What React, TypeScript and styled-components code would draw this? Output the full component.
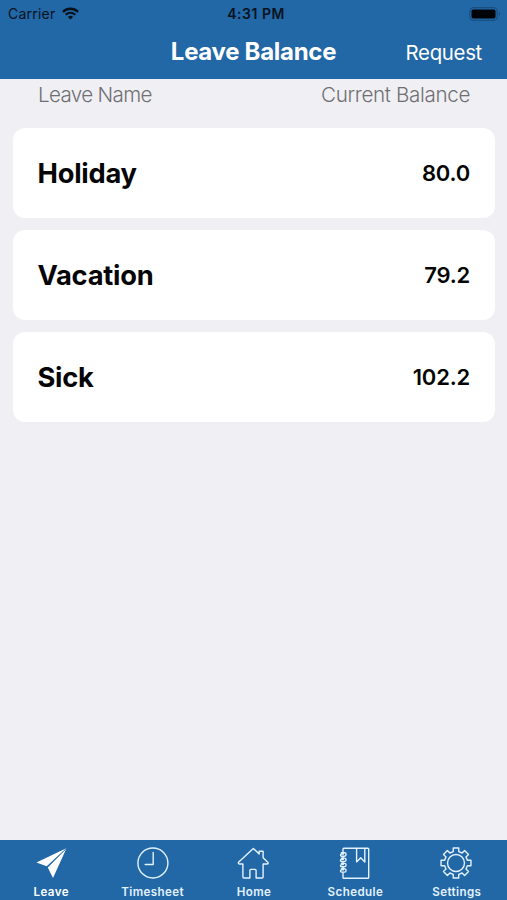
import React from "react";
import styled, { createGlobalStyle } from "styled-components";

const BLUE = "#2267a6";

const GlobalStyle = createGlobalStyle`
  *, *::before, *::after { box-sizing: border-box; }
  html, body { margin: 0; padding: 0; }
  body { font-family: Inter, "Liberation Sans", sans-serif; background: #efeff4; }
`;

const Screen = styled.div`
  width: 100%;
  height: 100vh;
  display: flex;
  flex-direction: column;
  overflow: hidden;
  background: #efeff4;
`;

const TopBar = styled.header`
  height: 79px;
  flex: none;
  background: ${BLUE};
`;

const StatusBar = styled.div`
  height: 27px;
  display: grid;
  grid-template-columns: 1fr auto 1fr;
  align-items: center;
  padding: 0 6px 0 8px;
  color: #07121d;
  font-size: 14px;
  line-height: 27px;
`;

const CarrierGroup = styled.div`
  display: flex;
  align-items: center;
  gap: 7px;
  letter-spacing: 0.22px;
`;

const Clock = styled.div`
  padding: 1px 0 0 3px;
  font-size: 13.9px;
  font-weight: 600;
  line-height: 26px;
  letter-spacing: 0.55px;
`;

const BatterySlot = styled.div`
  display: flex;
  justify-content: flex-end;
`;

const NavBar = styled.div`
  height: 50px;
  display: grid;
  grid-template-columns: 1fr auto 1fr;
  align-items: baseline;
  padding: 10px 25px 0;
  color: #fff;
  line-height: 30px;
`;

const Title = styled.h1`
  grid-column: 2;
  margin: 0;
  font-size: 24px;
  font-weight: 650;
  line-height: 30px;
  letter-spacing: -0.3px;
`;

const RequestButton = styled.button`
  justify-self: end;
  border: 0;
  padding: 0;
  background: none;
  color: #fff;
  font: 400 20.4px/30px Inter, sans-serif;
  letter-spacing: -0.3px;
`;

const Content = styled.main`
  flex: 1;
  padding: 0 12px 0 13px;
`;

const ColumnHeads = styled.div`
  height: 49px;
  display: flex;
  justify-content: space-between;
  padding: 1px 25px 0;
  color: #6f6f73;
  font-size: 20.6px;
  font-weight: 300;
  line-height: 30px;
`;

const ColumnHead = styled.span<{ $tracking: string }>`
  letter-spacing: ${(p) => p.$tracking};
`;

const BalanceList = styled.div`
  display: flex;
  flex-direction: column;
  gap: 12px;
`;

const BalanceCard = styled.div`
  height: 90px;
  display: flex;
  align-items: center;
  justify-content: space-between;
  padding: 0 25px 0 24.5px;
  border-radius: 12px;
  background: #fff;
  color: #050505;
`;

const LeaveName = styled.span`
  font-size: 27.3px;
  font-weight: 650;
  letter-spacing: -0.25px;
`;

const Amount = styled.span`
  font-size: 22px;
  font-weight: 580;
  letter-spacing: -0.2px;
`;

const TabBar = styled.nav`
  height: 60px;
  flex: none;
  display: grid;
  grid-template-columns: repeat(5, 1fr);
  background: ${BLUE};
`;

const Tab = styled.div<{ $active?: boolean }>`
  display: flex;
  flex-direction: column;
  align-items: center;
  padding-top: 6px;
  color: ${(p) => (p.$active ? "#ffffff" : "#e3f2ff")};
`;

const TabLabel = styled.span`
  font-size: 11.6px;
  font-weight: 600;
  line-height: 14px;
  letter-spacing: 0.4px;
  margin: 6px 0 0 1px;
`;

const LineIcon = styled.svg.attrs({ width: 34, height: 34, viewBox: "0 0 34 34" })`
  display: block;
  flex: none;
  margin-bottom: -1px;
  fill: none;
  stroke: currentColor;
  stroke-width: 1.4;
  stroke-linejoin: round;
  stroke-linecap: round;
`;

const WifiIcon = () => (
  <svg width="17" height="13" viewBox="0 0 17 13" fill="none" stroke="#07121d">
    <path d="M.9 4.8a11 11 0 0 1 15.2 0" strokeWidth="2.3" />
    <path d="M3.7 7.7a7 7 0 0 1 9.6 0" strokeWidth="2.1" />
    <path d="M5.9 9.9a3.8 3.8 0 0 1 5.2 0L8.5 12.5Z" fill="#07121d" stroke="none" />
  </svg>
);

const BatteryIcon = () => (
  <svg width="32" height="14" viewBox="0 0 32 14">
    <rect x=".9" y=".7" width="27.2" height="12.6" rx="3.2" fill="none" stroke="#174b7a" />
    <rect x="2.5" y="2.4" width="24" height="9.2" rx="1.8" fill="#000408" />
    <path d="M29.8 4.8c1.5.6 1.5 3.8 0 4.4Z" fill="#174b7a" />
  </svg>
);

const PlaneIcon = () => (
  <LineIcon>
    <path d="M32.3 2.2 2.4 16.4 12.7 20.2Z" fill="currentColor" stroke="none" />
    <path d="M32.4 2.6 13.8 21.4 19 32Z" fill="currentColor" stroke="none" />
    <path d="M31.7 3.2 13.2 21" stroke={BLUE} strokeWidth=".6" />
  </LineIcon>
);

const ClockIcon = () => (
  <LineIcon>
    <circle cx="17.9" cy="17" r="15" />
    <path d="M18.2 6.5v12h-8" />
  </LineIcon>
);

const HomeIcon = () => (
  <LineIcon>
    <path d="M17.3 2.4 2.5 16.2q-.5 1.8 1.3 1.8H6.9V31q0 1 1 1H13.9V24.4q0-1 1-1h4.2q1 0 1 1V32h6q1 0 1-1V18h3.9q1.7-.3.8-1.8l-4.7-4.4V5.2h-3.9v2.9Z" />
  </LineIcon>
);

const NotebookIcon = () => (
  <LineIcon>
    <path d="M5 6.3V3q0-.8.8-.8h24.1q.8 0 .8.8v28.4q0 .8-.8.8H5.8q-.8 0-.8-.8v-4.5" />
    <path d="M18.6 2.4v13.5l4.1-4.1 4.1 4.1V2.4" />
    {[8.5, 13.8, 19.1, 24.4].map((y) => (
      <path
        key={y}
        d={`M3.4 ${y - 1.7}h3a1.7 1.7 0 0 1 0 3.4H3.6a1.1 1.1 0 0 1 0-2.2H5.4`}
      />
    ))}
    {[11.2, 16.5, 21.8].map((y) => (
      <path key={y} d={`M5 ${y - 0.6}v1.2`} />
    ))}
  </LineIcon>
);

const gearPath = (() => {
  const center = 17;
  const points: string[] = [];
  for (let tooth = 0; tooth < 8; tooth++) {
    const corners: [number, number][] = [
      [-13.5, 11.7],
      [-10.5, 15.2],
      [10.5, 15.2],
      [13.5, 11.7],
    ];
    corners.forEach(([offset, radius]) => {
      const angle = ((tooth * 45 + offset - 90) * Math.PI) / 180;
      points.push(
        `${(center + radius * Math.cos(angle)).toFixed(2)} ${(center + radius * Math.sin(angle)).toFixed(2)}`
      );
    });
  }
  return `M${points.join("L")}Z`;
})();

const GearIcon = () => (
  <LineIcon>
    <path d={gearPath} />
    <circle cx="17" cy="17" r="8.5" />
  </LineIcon>
);

const balances = [
  { name: "Holiday", amount: "80.0" },
  { name: "Vacation", amount: "79.2" },
  { name: "Sick", amount: "102.2" },
];

const tabs = [
  { label: "Leave", Icon: PlaneIcon },
  { label: "Timesheet", Icon: ClockIcon },
  { label: "Home", Icon: HomeIcon },
  { label: "Schedule", Icon: NotebookIcon },
  { label: "Settings", Icon: GearIcon },
];

export default function App() {
  return (
    <>
      <GlobalStyle />
      <Screen>
        <TopBar>
          <StatusBar>
            <CarrierGroup>
              Carrier
              <WifiIcon />
            </CarrierGroup>
            <Clock>4:31 PM</Clock>
            <BatterySlot>
              <BatteryIcon />
            </BatterySlot>
          </StatusBar>
          <NavBar>
            <Title>Leave Balance</Title>
            <RequestButton>Request</RequestButton>
          </NavBar>
        </TopBar>
        <Content>
          <ColumnHeads>
            <ColumnHead $tracking="-0.65px">Leave Name</ColumnHead>
            <ColumnHead $tracking="-0.35px">Current Balance</ColumnHead>
          </ColumnHeads>
          <BalanceList>
            {balances.map(({ name, amount }) => (
              <BalanceCard key={name}>
                <LeaveName>{name}</LeaveName>
                <Amount>{amount}</Amount>
              </BalanceCard>
            ))}
          </BalanceList>
        </Content>
        <TabBar>
          {tabs.map(({ label, Icon }, index) => (
            <Tab key={label} $active={index === 0}>
              <Icon />
              <TabLabel>{label}</TabLabel>
            </Tab>
          ))}
        </TabBar>
      </Screen>
    </>
  );
}
